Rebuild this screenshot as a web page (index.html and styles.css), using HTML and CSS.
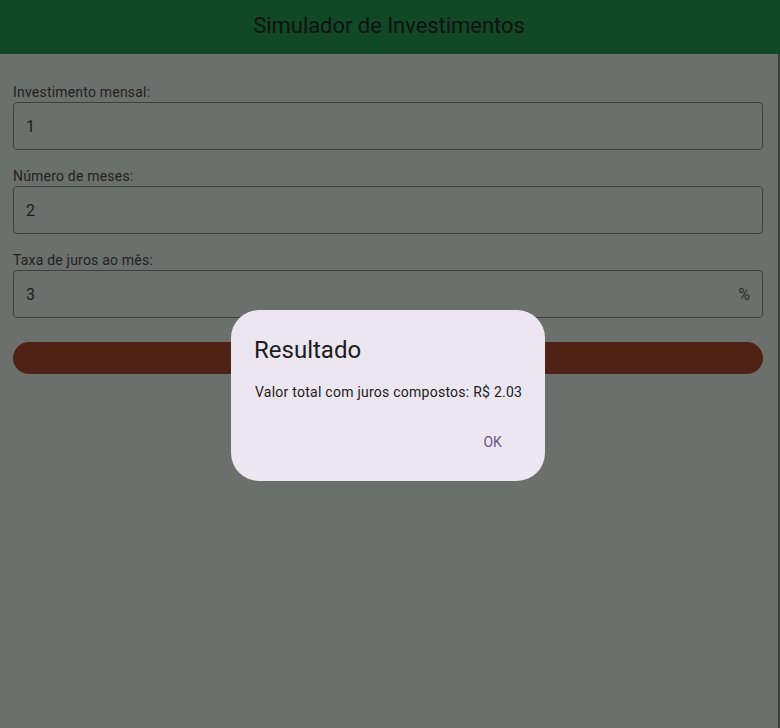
FILE: index.html
```html
<!DOCTYPE html>
<html lang="pt">
<head>
<meta charset="utf-8">
<title>Simulador de Investimentos</title>
<link rel="stylesheet" href="styles.css">
</head>
<body>
<div class="app">
  <header class="appbar">Simulador de Investimentos</header>
  <main class="content">
    <div class="field-group">
      <label class="label">Investimento mensal:</label>
      <div class="input"><span class="value">1</span></div>
    </div>
    <div class="field-group">
      <label class="label">Número de meses:</label>
      <div class="input"><span class="value">2</span></div>
    </div>
    <div class="field-group">
      <label class="label">Taxa de juros ao mês:</label>
      <div class="input"><span class="value">3</span><span class="suffix">%</span></div>
    </div>
    <div class="button"></div>
  </main>
</div>
<div class="dialog">
  <h2 class="dialog-title">Resultado</h2>
  <p class="dialog-content">Valor total com juros compostos: R$ 2.03</p>
  <div class="dialog-actions"><span class="ok">OK</span></div>
</div>
</body>
</html>
```
FILE: styles.css
```css
html, body {
  margin: 0;
  padding: 0;
  width: 780px;
  height: 728px;
  overflow: hidden;
  background: #6c706c;
  font-family: Roboto, "Noto Sans", sans-serif;
}
.app {
  display: flex;
  flex-direction: column;
  height: 728px;
}
.appbar {
  height: 54px;
  flex: none;
  background: #114826;
  color: #101311;
  font-size: 22px;
  display: flex;
  align-items: center;
  justify-content: center;
  padding: 0 2px 3px 0;
  box-sizing: border-box;
  letter-spacing: -0.05px;
}
.content {
  flex: 1;
  display: flex;
  flex-direction: column;
  gap: 16px;
  padding: 28px 15px 0 13px;
  border-right: 2px solid #3b3e3b;
}
.field-group {
  display: flex;
  flex-direction: column;
}
.label {
  font-size: 14px;
  line-height: 20px;
  color: #1f211f;
  letter-spacing: 0.2px;
}
.input {
  height: 48px;
  box-sizing: border-box;
  border: 1px solid #3e3f41;
  border-radius: 4px;
  display: flex;
  align-items: center;
  justify-content: space-between;
  padding: 0 12px;
  font-size: 16px;
  color: #1c1d1c;
}
.suffix {
  color: #2a2b2a;
}
.button {
  height: 32px;
  margin-top: 8px;
  border-radius: 16px;
  background: #4e2215;
}
.dialog {
  position: absolute;
  left: 231px;
  top: 310px;
  width: 314px;
  height: 171px;
  box-sizing: border-box;
  background: #ece6f0;
  border-radius: 28px;
  padding: 24px 0 0 24px;
  display: flex;
  flex-direction: column;
}
.dialog-title {
  margin: 0;
  font-size: 24px;
  line-height: 32px;
  font-weight: 400;
  color: #1d1b20;
  margin-left: -1px;
}
.dialog-content {
  margin: 16px 0 0 0;
  font-size: 14px;
  line-height: 20px;
  color: #1d1b20;
  letter-spacing: 0.25px;
}
.dialog-actions {
  margin-top: 20px;
  display: flex;
  justify-content: flex-end;
  padding-right: 31px;
}
.ok {
  height: 40px;
  display: flex;
  align-items: center;
  padding: 0 12px;
  font-size: 14px;
  color: #65558f;
  letter-spacing: 0.1px;
}
```
